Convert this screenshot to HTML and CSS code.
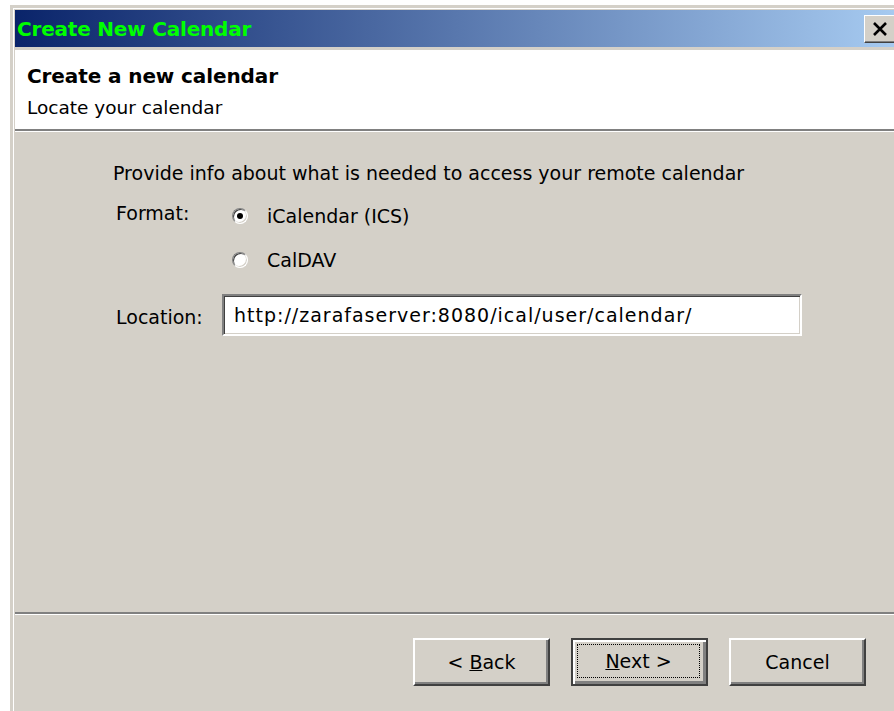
FILE: index.html
```html
<!DOCTYPE html>
<html>
<head>
<meta charset="utf-8">
<title>Create New Calendar</title>
<link rel="stylesheet" href="styles.css">
</head>
<body>
<div class="window">
  <div class="titlebar">
    <span class="title">Create New Calendar</span>
    <button class="close" aria-label="Close">
      <svg width="16" height="14" viewBox="0 0 16 14"><path d="M2 1 L14 13 M14 1 L2 13" stroke="#000" stroke-width="2.6"/></svg>
    </button>
  </div>
  <div class="header">
    <div class="heading">Create a new calendar</div>
    <div class="subheading">Locate your calendar</div>
  </div>
  <div class="content">
    <p class="intro">Provide info about what is needed to access your remote calendar</p>
    <div class="row format-row">
      <span class="label">Format:</span>
      <div class="options">
        <label class="option"><span class="radio checked"></span>iCalendar (ICS)</label>
        <label class="option"><span class="radio"></span>CalDAV</label>
      </div>
    </div>
    <div class="row location-row">
      <span class="label">Location:</span>
      <div class="textbox">http://zarafaserver:8080/ical/user/calendar/</div>
    </div>
  </div>
  <div class="footer">
    <button class="btn"><span>&lt; <u>B</u>ack</span></button>
    <button class="btn default"><span class="focus"><u>N</u>ext &gt;</span></button>
    <button class="btn cancel"><span>Cancel</span></button>
  </div>
</div>
</body>
</html>
```
FILE: styles.css
```css
html, body {
  margin: 0;
  background: #fff;
  height: 100%;
  overflow: hidden;
}
body {
  font-family: "DejaVu Sans", Verdana, sans-serif;
  font-size: 19px;
  color: #000;
}
.window {
  margin: 5px 0 0 10px;
  border-top: 3px solid #d4d0c8;
  border-left: 3px solid #d4d0c8;
  box-shadow: inset 1px 1px 0 #fff;
  padding: 2px 0 0 2px;
  background: #d4d0c8;
  height: 706px;
  box-sizing: border-box;
}
.titlebar {
  height: 37px;
  background: linear-gradient(to right, #0a246a, #a6caf0);
  display: flex;
  align-items: center;
  justify-content: space-between;
}
.title {
  color: #00ff00;
  font-weight: bold;
  font-size: 20px;
  padding-left: 2px;
  letter-spacing: -0.2px;
}
.close {
  width: 32px;
  height: 28px;
  margin-right: -2px;
  padding: 0;
  background: #d4d0c8;
  border: 1px solid;
  border-color: #fff #404040 #404040 #fff;
  box-shadow: inset -1px -1px 0 #808080;
  display: flex;
  align-items: center;
  justify-content: center;
}
.header {
  margin-top: 3px;
  background: #fff;
  height: 81px;
  padding-left: 12px;
  box-sizing: border-box;
  padding-top: 14px;
  border-bottom: 2px solid #808080;
  box-shadow: 0 1px 0 #fff;
}
.heading {
  font-weight: bold;
  font-size: 20px;
  line-height: 24px;
  letter-spacing: -0.1px;
}
.subheading {
  font-size: 18.5px;
  line-height: 24px;
  margin-top: 8px;
}
.content {
  height: 483px;
  padding: 31px 0 0 98px;
  box-sizing: border-box;
  border-bottom: 2px solid #808080;
  box-shadow: 0 1px 0 #fff;
}
.intro {
  margin: 0 0 18px;
  line-height: 22px;
}
.row {
  display: flex;
}
.label {
  width: 106px;
  padding-left: 3px;
}
.format-row .label {
  line-height: 22px;
}
.options {
  display: flex;
  flex-direction: column;
  gap: 22px;
  padding-top: 3px;
}
.option {
  display: flex;
  align-items: center;
  gap: 19px;
  line-height: 22px;
  margin-left: 10px;
}
.radio {
  flex: 0 0 auto;
  width: 16px;
  height: 16px;
  border-radius: 50%;
  background: #fff;
  border: 1px solid;
  border-color: #808080 #fff #fff #808080;
  box-shadow: inset 1px 1px 0 #404040, inset -1px -1px 0 #d4d0c8;
  position: relative;
  box-sizing: border-box;
}
.radio.checked::after {
  content: "";
  position: absolute;
  left: 4px;
  top: 4px;
  width: 6px;
  height: 6px;
  border-radius: 50%;
  background: #000;
}
.location-row {
  margin-top: 23px;
  align-items: center;
}
.location-row .label {
  padding-top: 4px;
}
.textbox {
  width: 580px;
  height: 42px;
  box-sizing: border-box;
  background: #fff;
  border: 2px solid;
  border-color: #808080 #fff #fff #808080;
  box-shadow: inset 1px 1px 0 #404040, inset -1px -1px 0 #d4d0c8;
  padding-left: 10px;
  letter-spacing: 1px;
  display: flex;
  align-items: center;
}
.footer {
  display: flex;
  gap: 21px;
  padding: 24px 0 0 398px;
}
.btn {
  width: 137px;
  height: 48px;
  padding: 0;
  font: inherit;
  color: #000;
  background: #d4d0c8;
  border: 2px solid;
  border-color: #fff #404040 #404040 #fff;
  box-shadow: inset -2px -2px 0 #808080;
}
.btn.default {
  border: 2px solid #404040;
  box-shadow: inset 2px 2px 0 #fff, inset -3px -3px 0 #808080;
}
.focus {
  display: block;
  margin: 4px 6px 6px 4px;
  height: 32px;
  line-height: 32px;
  border: 1px dotted #000;
}
```
